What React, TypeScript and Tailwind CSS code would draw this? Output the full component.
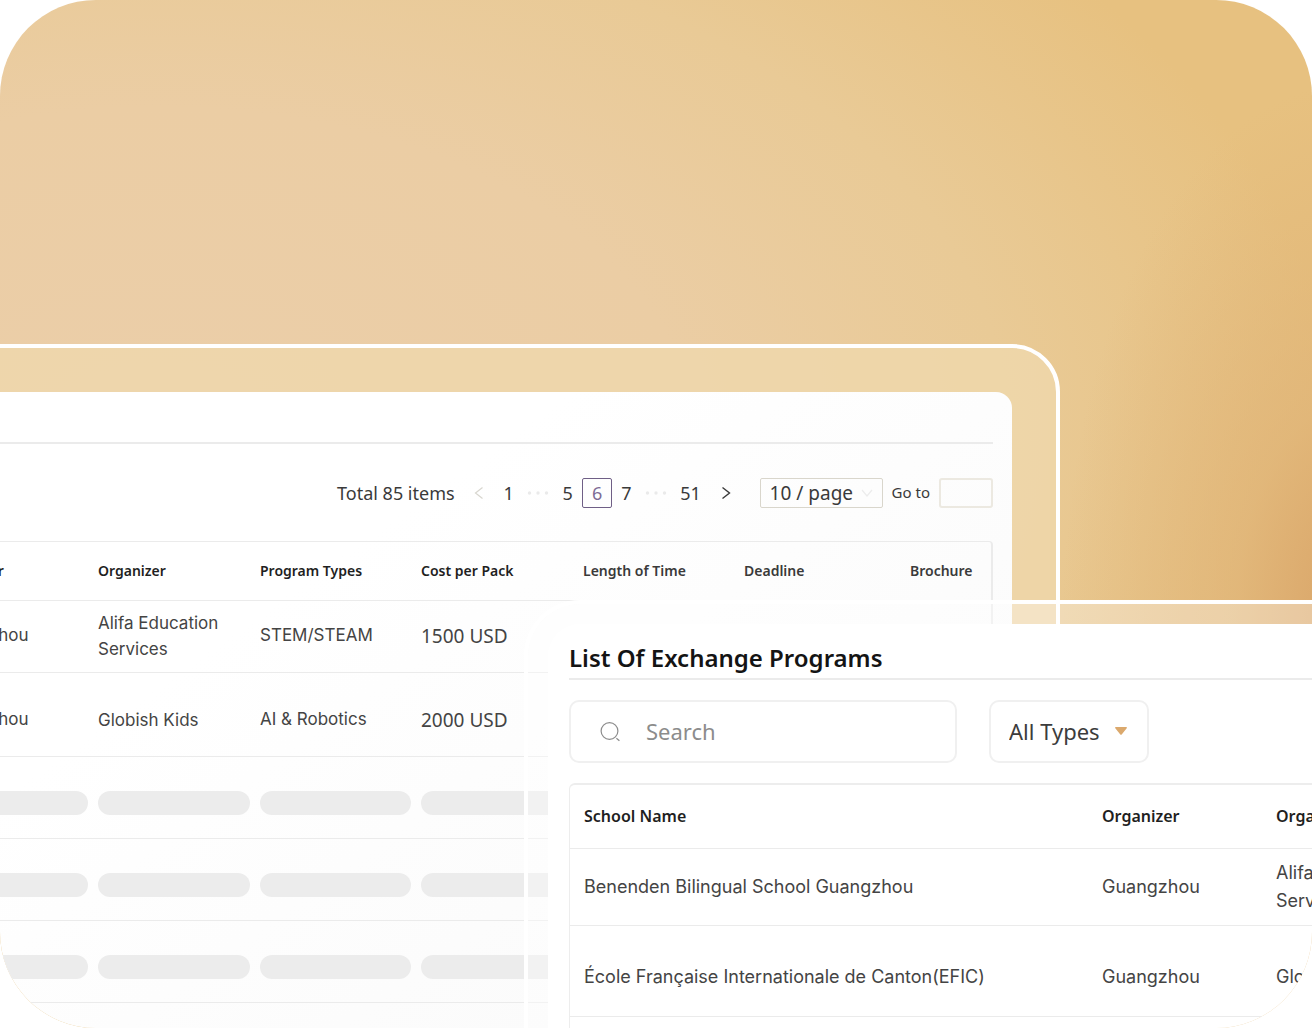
import { useState } from 'react';
import clsx from 'clsx';

const BACK_COLUMNS = [
  { label: 'Organizer', width: 162 },
  { label: 'Organizer', width: 162 },
  { label: 'Program Types', width: 161 },
  { label: 'Cost per Pack', width: 162 },
  { label: 'Length of Time', width: 161 },
  { label: 'Deadline', width: 166 },
  { label: 'Brochure', width: 86 },
];

const BACK_ROWS = [
  { city: 'Guangzhou', organizer: 'Alifa Education Services', type: 'STEM/STEAM', cost: '1500 USD', height: 'h-[72px]' },
  { city: 'Guangzhou', organizer: 'Globish Kids', type: 'AI & Robotics', cost: '2000 USD', height: 'h-[84px] *:pt-3' },
];

const SCHOOLS = [
  { name: 'Benenden Bilingual School Guangzhou', city: 'Guangzhou', organizer: 'Alifa Education Services', height: 'h-[77px]' },
  { name: 'École Française Internationale de Canton(EFIC)', city: 'Guangzhou', organizer: 'Globish Kids', height: 'h-[91px] *:pt-3' },
];

const UI_FONT = "font-['Noto_Sans','Open_Sans',sans-serif]";
const BODY_FONT = "font-['Inter',sans-serif]";

function Dots() {
  return (
    <svg viewBox="0 0 22 4" className="w-[22px] h-1 mx-auto self-center" fill="#eaeaea" aria-hidden="true">
      <circle cx="2.5" cy="2" r="1.7" />
      <circle cx="11" cy="2" r="1.7" />
      <circle cx="19.5" cy="2" r="1.7" />
    </svg>
  );
}

function Pagination() {
  const [page, setPage] = useState(6);

  const pageButton = (n: number) => (
    <button
      type="button"
      onClick={() => setPage(n)}
      className={clsx(
        'h-[30px] w-full rounded-[2px] border text-center leading-7',
        page === n ? 'border-[#6f5f86] text-[#7d6c96]' : 'border-transparent'
      )}
    >
      {n}
    </button>
  );

  return (
    <div className="flex items-center justify-end h-[97px] text-lg text-[#3a3a3a]">
      <span className="mr-[10px] whitespace-nowrap">Total 85 items</span>
      <nav className="flex items-center mr-[18px]" aria-label="Pagination">
        <div className="grid grid-cols-7 w-[206px]">
          <button type="button" aria-label="Previous page" className="flex items-center justify-center">
            <svg viewBox="0 0 10 14" className="w-[10px] h-[14px]" fill="none" stroke="#d8d6cf" strokeWidth="1.2">
              <path d="M8.5 1.5 1.5 7l7 5.5" />
            </svg>
          </button>
          {pageButton(1)}
          <Dots />
          {pageButton(5)}
          {pageButton(6)}
          {pageButton(7)}
          <Dots />
        </div>
        <div className="w-10">{pageButton(51)}</div>
        <button type="button" aria-label="Next page" className="flex items-center justify-center w-[31px] h-[30px]">
          <svg viewBox="0 0 10 14" className="w-[10px] h-[14px]" fill="none" stroke="#3a3a3a" strokeWidth="1.4">
            <path d="M1.5 1.5 8.5 7l-7 5.5" />
          </svg>
        </button>
      </nav>
      <div className="relative mr-[9px]">
        <select
          aria-label="Page size"
          defaultValue="10"
          className="appearance-none w-[123px] h-[30px] pl-[9px] rounded-[2px] border border-[#d9d6cc] bg-transparent text-[19px]"
        >
          <option value="10">10 / page</option>
          <option value="20">20 / page</option>
        </select>
        <svg
          viewBox="0 0 12 8"
          className="absolute right-[10px] top-[11px] w-3 h-2 pointer-events-none"
          fill="none"
          stroke="#ececec"
          strokeWidth="1.2"
        >
          <path d="M1 1l5 6 5-6" />
        </svg>
      </div>
      <label htmlFor="goto" className="mr-[9px] text-[15px] whitespace-nowrap">Go to</label>
      <input id="goto" className="w-[54px] h-[30px] px-2 rounded-[3px] border-2 border-[#ece9e1] bg-transparent" />
    </div>
  );
}

function BackWindow() {
  return (
    <section className="col-start-1 row-start-1 mt-[344px] mr-[252px] -ml-24 pt-11 pr-11 rounded-tr-[48px] border-4 border-white bg-[#efd8ac]/80">
      <div className="h-full pr-[19px] rounded-tr-2xl overflow-hidden bg-linear-to-br from-white from-30% to-[#f8f8f8]">
        <header className="h-[52px] border-b-2 border-[#ebebeb]" />
        <Pagination />
        <div className="flex justify-end">
          <div className="shrink-0 border-t border-r-2 border-[#ebebeb] rounded-tr-[4px] h-[600px]">
            <table className="table-fixed w-[1060px] text-left">
              <colgroup>
                {BACK_COLUMNS.map((col, i) => (
                  <col key={i} style={{ width: col.width }} />
                ))}
              </colgroup>
              <thead>
                <tr className="h-[58px] border-b border-[#ebebeb]">
                  {BACK_COLUMNS.map((col, i) => (
                    <th
                      key={i}
                      className={clsx(
                        'px-[5px] text-sm font-semibold whitespace-nowrap',
                        i > 3 ? 'text-[#3a3a3a]' : 'text-[#1f1f1f]'
                      )}
                    >
                      {col.label}
                    </th>
                  ))}
                </tr>
              </thead>
              <tbody className="text-[#444444]">
                {BACK_ROWS.map(row => (
                  <tr key={row.organizer} className={clsx('border-b border-[#ebebeb]', row.height, BODY_FONT)}>
                    <td className="px-[5px] text-[17px]">{row.city}</td>
                    <td className="px-[5px] text-[17px] leading-[26px]">{row.organizer}</td>
                    <td className="px-[5px] text-[17px]">{row.type}</td>
                    <td className={clsx('px-[5px] text-[19px]', UI_FONT)}>{row.cost}</td>
                    <td colSpan={3} />
                  </tr>
                ))}
                {[0, 1, 2, 3].map(n => (
                  <tr key={n} className="h-[82px] border-b border-[#ebebeb]">
                    {BACK_COLUMNS.map((_, i) => (
                      <td key={i} className="px-[5px] pt-[11px]">
                        <div className="h-6 rounded-full bg-[#ececec]" />
                      </td>
                    ))}
                  </tr>
                ))}
              </tbody>
            </table>
          </div>
        </div>
      </div>
    </section>
  );
}

function FrontWindow() {
  return (
    <section className="col-start-1 row-start-1 z-10 mt-[600px] ml-[524px] -mr-24 pt-5 pl-5 rounded-tl-[56px] border-t-4 border-l-4 border-white bg-white/35 bg-clip-padding">
      <div className="h-full pl-[21px] pt-4 rounded-tl-[32px] bg-white">
        <h1 className="h-[40px] text-2xl leading-9 font-semibold text-[#141414] border-b-2 border-[#ebebeb]">
          List Of Exchange Programs
        </h1>
        <div className="flex gap-8 mt-[20px] text-[22px]">
          <label className="flex items-center w-[388px] h-[63px] pl-[29px] rounded-[10px] border-2 border-[#f0f0f0]">
            <svg viewBox="0 0 20 20" className="w-5 h-5 mr-[26px] shrink-0" fill="none" stroke="#8c8c8c" strokeWidth="1.2" aria-hidden="true">
              <circle cx="9.5" cy="9" r="8.4" />
              <path d="M16.4 16.2l3 2.6" />
            </svg>
            <input
              type="search"
              aria-label="Search"
              placeholder="Search"
              className="w-full bg-transparent outline-none placeholder:text-[#8c8c8c]"
            />
          </label>
          <div className="relative">
            <select
              aria-label="Program type"
              className="appearance-none w-[160px] h-[63px] pl-[18px] rounded-[10px] border-2 border-[#f0f0f0] bg-white text-[#3c3c3c]"
            >
              <option>All Types</option>
            </select>
            <svg viewBox="0 0 12 8" className="absolute right-[22px] top-[27px] w-3 h-2 pointer-events-none" fill="#dba96d">
              <path d="M.8 0h10.4c.7 0 1 .8.5 1.3L6.7 7.4a1 1 0 0 1-1.4 0L.3 1.3C-.2.8.1 0 .8 0z" />
            </svg>
          </div>
        </div>
        <div className="mt-5 h-[400px] border-t-2 border-l border-[#ededed] rounded-tl-[6px]">
          <table className="table-fixed w-full text-left">
            <colgroup>
              <col className="w-[518px]" />
              <col className="w-[174px]" />
              <col />
            </colgroup>
            <thead>
              <tr className="h-[63px] border-b border-[#ebebeb] text-base text-[#1f1f1f]">
                <th className="pl-[14px] font-semibold">School Name</th>
                <th className="pl-[14px] font-semibold">Organizer</th>
                <th className="pl-[14px] font-semibold">Organizer</th>
              </tr>
            </thead>
            <tbody className={clsx('text-lg leading-7 text-[#444444]', BODY_FONT)}>
              {SCHOOLS.map(school => (
                <tr key={school.name} className={clsx('border-b border-[#ebebeb]', school.height)}>
                  <td className="pl-[14px]">{school.name}</td>
                  <td className="pl-[14px]">{school.city}</td>
                  <td className="pl-[14px]">{school.organizer}</td>
                </tr>
              ))}
            </tbody>
          </table>
        </div>
      </div>
    </section>
  );
}

export default function App() {
  return (
    <div className={clsx('h-screen bg-white', UI_FONT)}>
      <main className="grid grid-cols-1 h-full overflow-hidden rounded-[96px] bg-[radial-gradient(ellipse_22%_52%_at_103%_60%,#d9a468_0%,#dfb275b0_40%,#e6c17f00_100%),radial-gradient(ellipse_90%_70%_at_12%_42%,#ebcea9_0%,#ebcda4_45%,#e9ca96_72%,#e7c180_100%)]">
        <BackWindow />
        <FrontWindow />
      </main>
    </div>
  );
}
